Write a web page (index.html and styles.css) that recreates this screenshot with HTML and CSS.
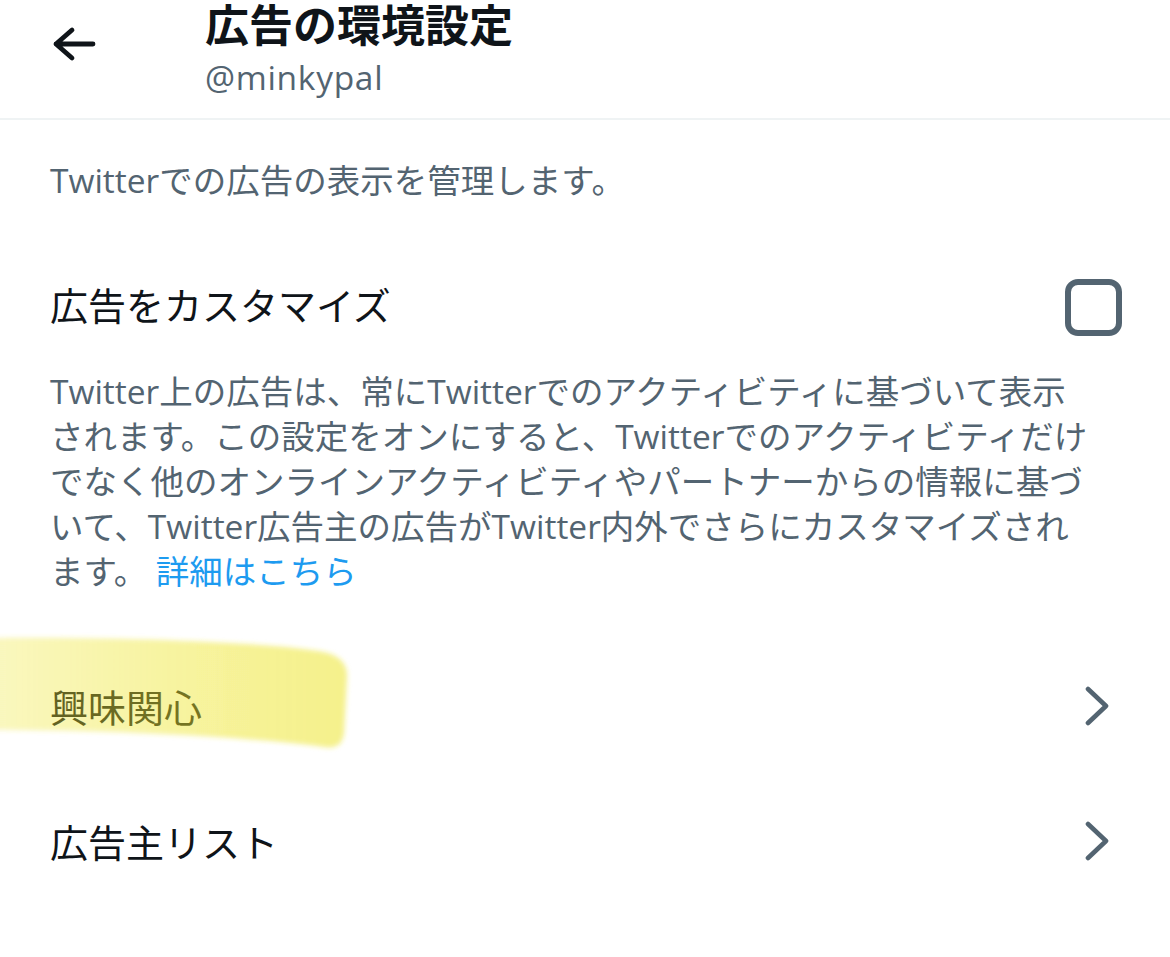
FILE: index.html
```html
<!DOCTYPE html>
<html lang="ja">
<head>
<meta charset="utf-8">
<title>広告の環境設定</title>
<link rel="stylesheet" href="styles.css">
</head>
<body>
<div class="page">
  <header class="header">
    <div class="back">
      <svg width="48" height="48" viewBox="0 0 48 48" aria-hidden="true">
        <path d="M6 24 H43 M22 10 L6 24 L22 38" fill="none" stroke="#0f1419" stroke-width="4.8" stroke-linecap="round" stroke-linejoin="round"/>
      </svg>
    </div>
    <div class="titles">
      <h1 class="title">広告の環境設定</h1>
      <div class="handle">@minkypal</div>
    </div>
  </header>

  <p class="intro">Twitterでの広告の表示を管理します。</p>

  <div class="setting">
    <span class="setting-label">広告をカスタマイズ</span>
    <span class="checkbox"></span>
  </div>

  <p class="explain">Twitter上の広告は、常にTwitterでのアクティビティに基づいて表示<br>されます。この設定をオンにすると、Twitterでのアクティビティだけ<br>でなく他のオンラインアクティビティやパートナーからの情報に基づ<br>いて、Twitter広告主の広告がTwitter内外でさらにカスタマイズされ<br>ます。 <a class="link" href="#">詳細はこちら</a></p>

  <ul class="menu">
    <li class="menu-row">
      <span class="menu-label">興味関心</span>
      <svg class="chev" width="26" height="40" viewBox="0 0 26 40" aria-hidden="true">
        <path d="M4 3 L22 20 L4 37" fill="none" stroke="#536471" stroke-width="4.6" stroke-linecap="round" stroke-linejoin="round"/>
      </svg>
      <svg class="marker" width="370" height="130" viewBox="0 0 370 130" aria-hidden="true">
        <defs>
          <filter id="soft" x="-10%" y="-20%" width="120%" height="140%">
            <feGaussianBlur stdDeviation="2.6"/>
          </filter>
          <linearGradient id="hl" x1="0" y1="0" x2="1" y2="0">
            <stop offset="0" stop-color="#efe63a" stop-opacity="0.32"/>
            <stop offset="0.5" stop-color="#ede52a" stop-opacity="0.45"/>
            <stop offset="1" stop-color="#ece421" stop-opacity="0.52"/>
          </linearGradient>
        </defs>
        <path d="M-10 7 C 100 6, 250 10, 318 20 Q 348 24, 347 46 L 344 102 Q 342 119, 324 116 C 250 106, 120 99, -10 99 Z" fill="url(#hl)" filter="url(#soft)"/>
      </svg>
    </li>
    <li class="menu-row">
      <span class="menu-label">広告主リスト</span>
      <svg class="chev" width="26" height="40" viewBox="0 0 26 40" aria-hidden="true">
        <path d="M4 3 L22 20 L4 37" fill="none" stroke="#536471" stroke-width="4.6" stroke-linecap="round" stroke-linejoin="round"/>
      </svg>
    </li>
  </ul>
</div>
</body>
</html>
```

FILE: styles.css
```css
* { box-sizing: border-box; }

html, body {
  margin: 0;
  padding: 0;
  background: #ffffff;
}

body {
  font-family: "Open Sans", "Noto Sans CJK JP", sans-serif;
  color: #0f1419;
  width: 1170px;
  height: 957px;
  overflow: hidden;
}

.page {
  width: 1170px;
}

.header {
  display: flex;
  align-items: flex-start;
  height: 120px;
  padding-left: 50px;
  border-bottom: 2px solid #eff3f4;
}

.back {
  width: 48px;
  height: 48px;
  margin-top: 20px;
}

.back svg { display: block; }

.titles {
  margin-left: 107px;
}

.title {
  margin: 0;
  font-size: 44px;
  line-height: 46px;
  font-weight: 700;
  color: #0f1419;
  font-family: "Noto Sans CJK JP", sans-serif;
}

.handle {
  margin-top: 11px;
  font-size: 33.5px;
  line-height: 40px;
  color: #536471;
  letter-spacing: 0.7px;
}

.intro {
  margin: 0;
  padding: 38px 50px 0;
  font-size: 33.5px;
  line-height: 45px;
  color: #536471;
}

.setting {
  display: flex;
  justify-content: space-between;
  align-items: center;
  margin-top: 72px;
  padding: 0 48px 0 50px;
  height: 60px;
}

.setting-label {
  font-size: 38px;
  line-height: 60px;
  color: #0f1419;
}

.checkbox {
  width: 57px;
  height: 57px;
  margin-top: 4px;
  border: 6px solid #536471;
  border-radius: 13px;
}

.explain {
  margin: 34px 0 0;
  padding: 0 30px 0 50px;
  font-size: 33.5px;
  line-height: 45px;
  color: #536471;
  white-space: nowrap;
}

.link {
  color: #1d9bf0;
  text-decoration: none;
}

.menu {
  list-style: none;
  margin: 45px 0 0;
  padding: 0;
}

.menu-row {
  position: relative;
  display: flex;
  justify-content: space-between;
  align-items: center;
  height: 135px;
  padding: 0 60px 0 50px;
}

.menu-label {
  font-size: 38px;
  line-height: 50px;
  color: #0f1419;
}

.chev {
  display: block;
  margin-top: -2px;
}

.marker {
  position: absolute;
  left: 0;
  top: -8px;
  pointer-events: none;
}
```
